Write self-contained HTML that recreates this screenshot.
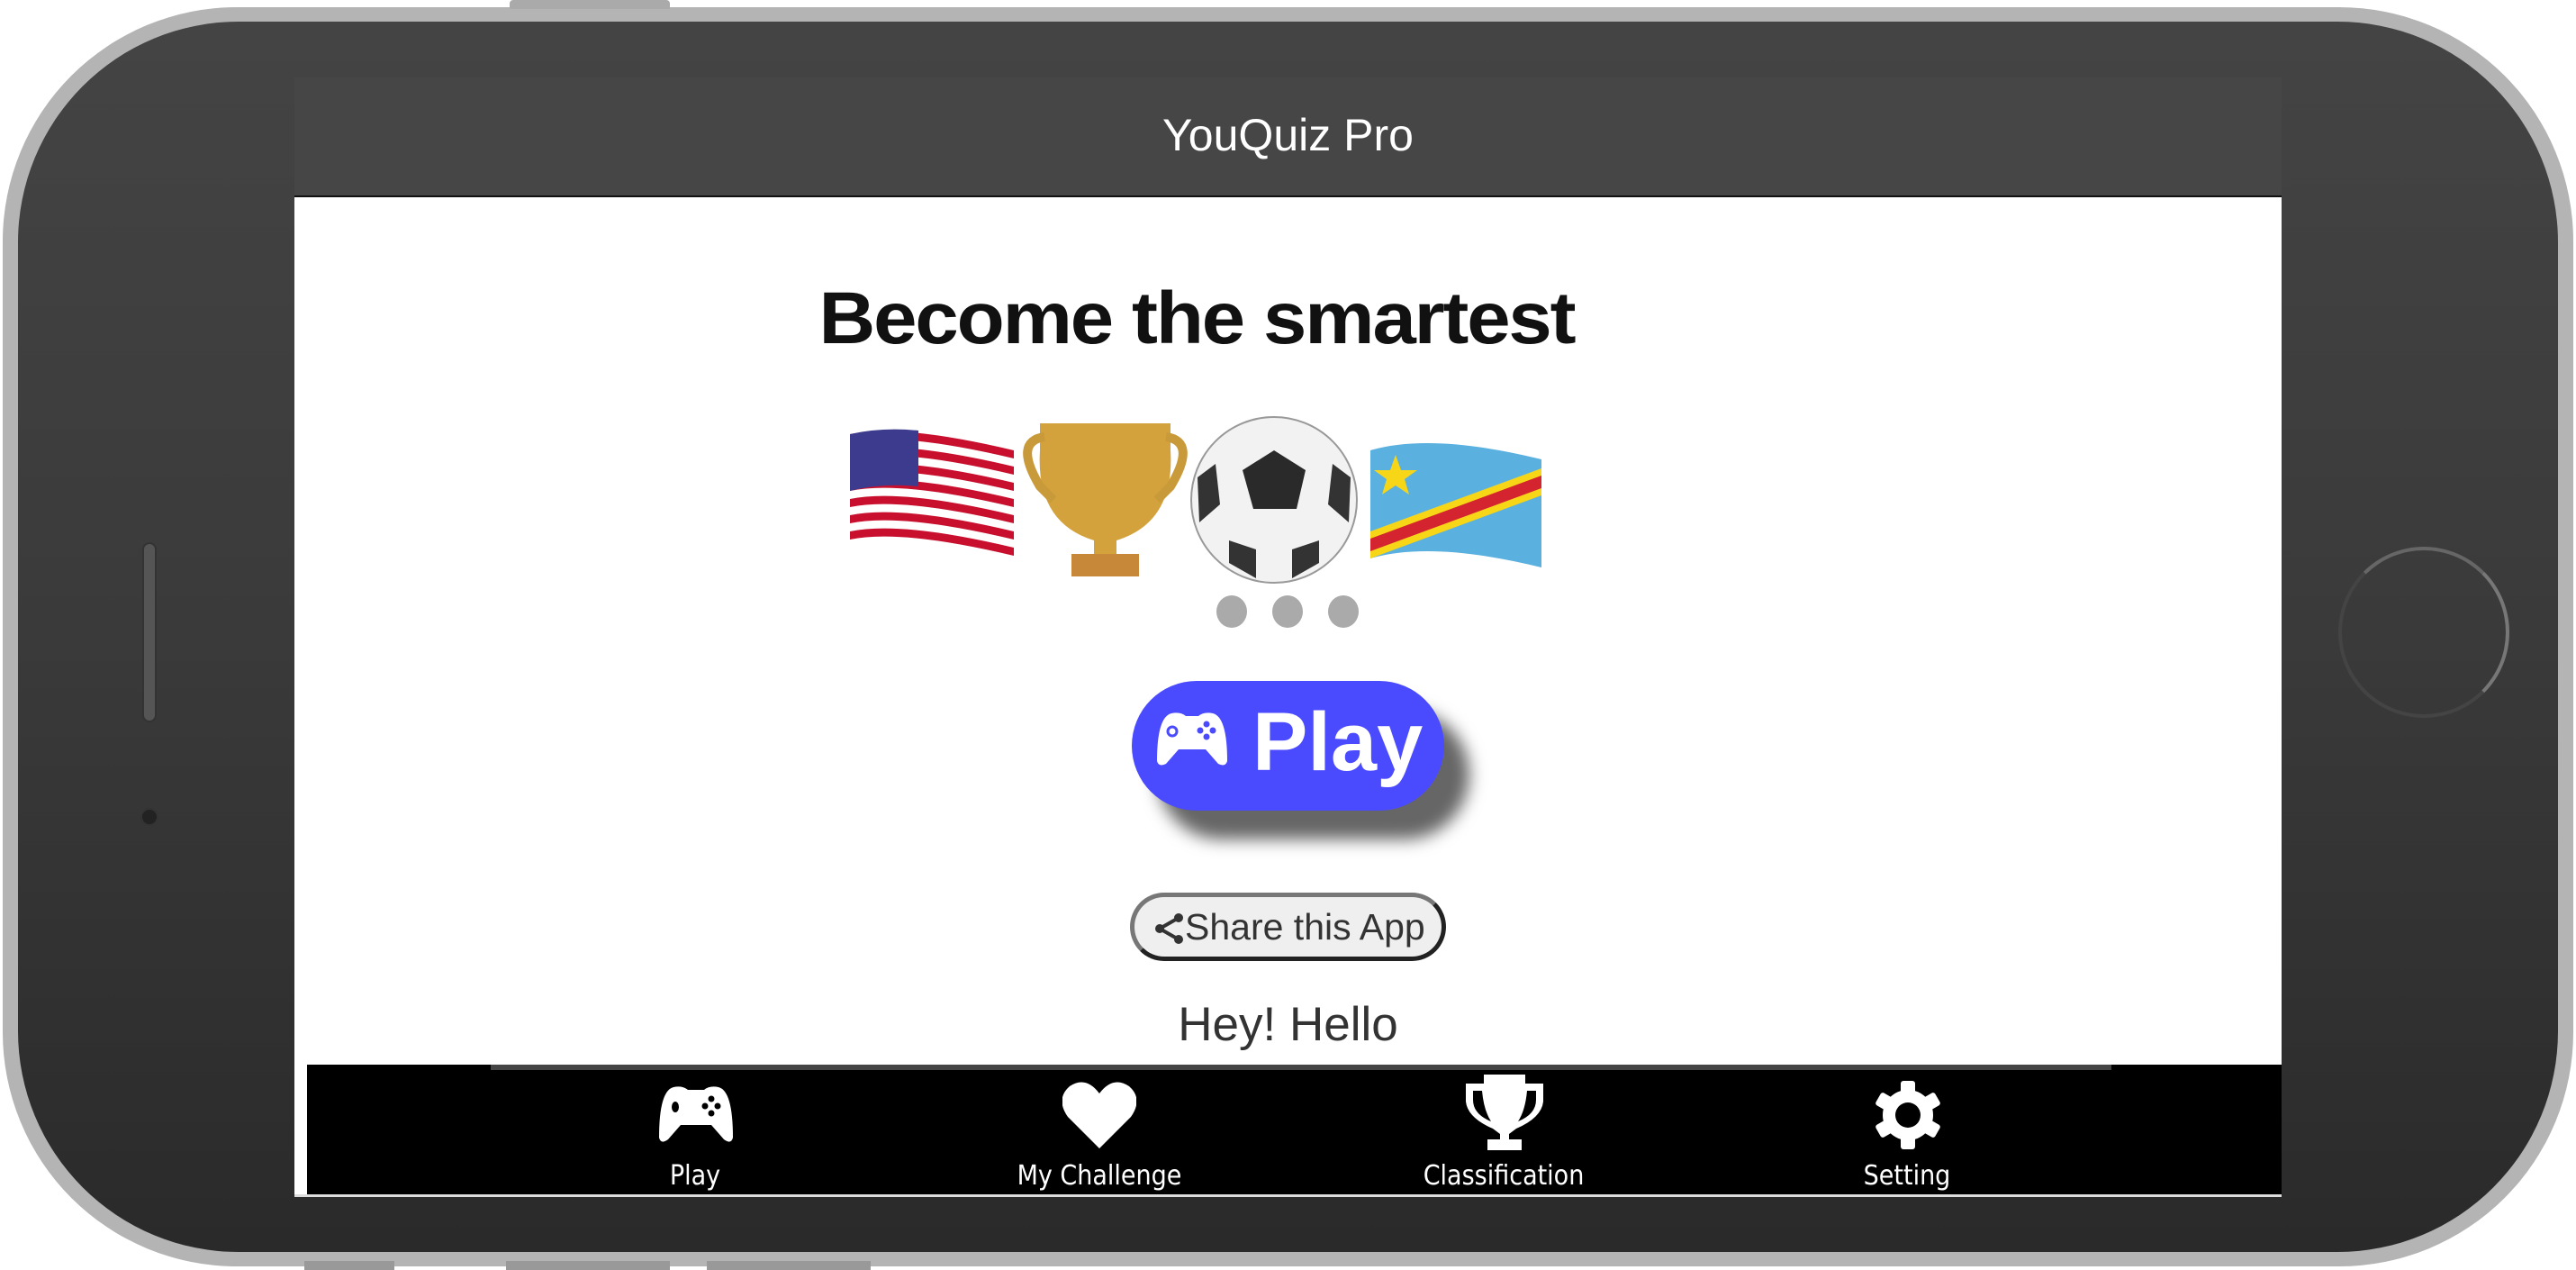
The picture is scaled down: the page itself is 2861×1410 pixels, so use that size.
<!DOCTYPE html>
<html><head><meta charset="utf-8"><style>
*{margin:0;padding:0;box-sizing:border-box}
body{width:2861px;height:1410px;background:#fff;position:relative;overflow:hidden;font-family:"Liberation Sans",sans-serif}
.abs{position:absolute}
#rim{left:3px;top:8px;width:2855px;height:1398px;border-radius:260px;background:#b4b4b4}
#body{left:20px;top:24px;width:2821px;height:1366px;border-radius:245px;background:linear-gradient(#444,#3a3a3a 50%,#2a2a2a)}
#screen{left:327px;top:86px;width:2207px;height:1242px;background:#fff}
#hdr{left:327px;top:86px;width:2207px;height:133px;background:#464646;border-bottom:2px solid #111;color:#fff;font-size:50px;text-align:center;line-height:128px}
.t{text-align:center;width:100%;left:0}
.dot{width:34px;height:36px;border-radius:50%;background:#aaa;top:661px}
#play{left:1257px;top:756px;width:347px;height:144px;border-radius:72px;background:#4a4aff;box-shadow:28px 32px 18px #666;color:#fff;font-weight:bold;font-size:92px;line-height:144px}
#share{left:1255px;top:991px;width:351px;height:76px;border-radius:38px;background:#efefef;border:5px solid #777;border-right-color:#222;border-bottom-color:#222;color:#333;font-size:41px;line-height:66px}
#nav{left:341px;top:1182px;width:2193px;height:145px;background:#000}
.lbl{color:#fff;font-size:30px;top:1288px;width:300px;text-align:center;font-family:"DejaVu Sans Condensed","Liberation Sans Narrow",sans-serif}
</style></head><body>
<div id="rim" class="abs"></div>
<div id="body" class="abs"></div>
<div class="abs" style="left:566px;top:0;width:178px;height:10px;background:#aaa;border-radius:4px 4px 0 0"></div>
<div class="abs" style="left:338px;top:1400px;width:100px;height:10px;background:#999"></div>
<div class="abs" style="left:562px;top:1400px;width:182px;height:10px;background:#999"></div>
<div class="abs" style="left:785px;top:1400px;width:182px;height:10px;background:#999"></div>
<div class="abs" style="left:158px;top:602px;width:16px;height:200px;border-radius:8px;background:#555;border:2px solid #333"></div>
<div class="abs" style="left:156px;top:897px;width:20px;height:20px;border-radius:50%;background:#222;border:2px solid #333"></div>
<div class="abs" style="left:2597px;top:607px;width:190px;height:190px;border-radius:50%;border:4px solid #444;border-top-color:#666;border-right-color:#777"></div>
<div id="screen" class="abs"></div>
<div id="hdr" class="abs">YouQuiz Pro</div>
<div class="abs" style="left:909px;top:307px;width:840px;text-align:center;font-weight:bold;font-size:82px;color:#111;letter-spacing:-2px;font-family:'Liberation Sans Narrow','Liberation Sans',sans-serif;transform:scaleX(1.06)">Become the smartest</div>
<svg class="abs" style="left:940px;top:460px" width="780" height="190" viewBox="0 0 780 190">
 <g transform="translate(0,10)">
  <path d="M4 12 Q60 0 186 30 L186 150 Q60 120 4 130Z" fill="#fff"/>
  <g fill="#c8102e">
   <path d="M4 12 Q60 0 186 30 L186 39 Q60 9 4 21Z"/><path d="M4 30 Q60 18 186 48 L186 57 Q60 27 4 39Z"/>
   <path d="M4 48 Q60 36 186 66 L186 75 Q60 45 4 57Z"/><path d="M4 66 Q60 54 186 84 L186 93 Q60 63 4 75Z"/>
   <path d="M4 84 Q60 72 186 102 L186 111 Q60 81 4 93Z"/><path d="M4 102 Q60 90 186 120 L186 129 Q60 99 4 111Z"/>
   <path d="M4 120 Q60 108 186 138 L186 147 Q60 117 4 129Z"/></g>
  <path d="M4 12 Q40 4 80 8 L80 70 Q40 66 4 75Z" fill="#3c3b8e"/>
 </g>
 <g transform="translate(195,0)">
  <path d="M20 10 H165 V40 Q170 120 105 140 V160 H120 V175 H65 V160 H80 V140 Q15 120 20 40Z" fill="#d4a23c"/>
  <path d="M25 25 Q-10 30 20 80 L35 95" stroke="#c99a3a" stroke-width="10" fill="none"/>
  <path d="M160 25 Q195 30 165 80 L150 95" stroke="#c99a3a" stroke-width="10" fill="none"/>
  <rect x="55" y="155" width="75" height="25" fill="#c8883a"/>
 </g>
 <g transform="translate(380,0)">
  <ellipse cx="95" cy="95" rx="92" ry="92" fill="#f2f2f2" stroke="#999" stroke-width="2"/>
  <path d="M95 40 L130 62 L120 105 L72 105 L60 62Z" fill="#2a2a2a"/>
  <path d="M10 70 L30 55 L35 100 L12 120Z" fill="#333"/><path d="M180 70 L160 55 L155 100 L178 120Z" fill="#333"/>
  <path d="M45 140 L75 150 L75 182 L45 165Z" fill="#333"/><path d="M145 140 L115 150 L115 182 L145 165Z" fill="#333"/>
 </g>
 <g transform="translate(580,10)">
  <path d="M2 30 Q70 10 192 40 L192 160 Q70 130 2 150Z" fill="#5ab0de"/>
  <path d="M2 120 L192 50 L192 80 L2 150Z" fill="#f7d618"/>
  <path d="M2 128 L192 58 L192 72 L2 142Z" fill="#d3242f"/>
  <polygon points="30,35 36,52 54,52 40,62 45,79 30,69 15,79 20,62 6,52 24,52" fill="#f7d618"/>
 </g>
</svg>
<div class="abs dot" style="left:1351px"></div>
<div class="abs dot" style="left:1413px"></div>
<div class="abs dot" style="left:1475px"></div>
<div id="play" class="abs"><svg class="abs" style="left:26px;top:34px" width="82" height="62" viewBox="0 0 82 62"><path d="M18 2 Q28 0 34 5 H48 Q54 0 64 2 Q80 6 80 55 Q78 62 70 58 L56 42 H26 L12 58 Q4 62 2 55 Q2 6 18 2Z" fill="#fff"/><circle cx="19" cy="22" r="5" fill="none" stroke="#4a4aff" stroke-width="3"/><circle cx="57" cy="14" r="3.5" fill="#4a4aff"/><circle cx="50" cy="21" r="3.5" fill="#4a4aff"/><circle cx="64" cy="21" r="3.5" fill="#4a4aff"/><circle cx="57" cy="28" r="3.5" fill="#4a4aff"/></svg><span class="abs" style="left:134px;top:-4px">Play</span></div>
<div id="share" class="abs"><svg class="abs" style="left:22px;top:18px" width="34" height="34" viewBox="0 0 34 34"><circle cx="27" cy="5" r="5" fill="#333"/><circle cx="6" cy="17" r="5" fill="#333"/><circle cx="27" cy="29" r="5" fill="#333"/><path d="M27 5 L6 17 L27 29" stroke="#333" stroke-width="4" fill="none"/></svg><span class="abs" style="left:56px;top:0">Share this App</span></div>
<div class="abs t" style="top:1107px;font-size:53px;color:#333">Hey! Hello</div>
<div id="nav" class="abs"></div>
<div class="abs" style="left:545px;top:1182px;width:1800px;height:6px;background:#444"></div>
<div class="abs" style="left:327px;top:1326px;width:2207px;height:3px;background:#ddd"></div>
<svg class="abs" style="left:730px;top:1205px" width="86" height="66" viewBox="0 0 86 66"><path d="M18 2 Q28 0 34 5 H52 Q58 0 68 2 Q84 6 84 58 Q82 66 74 60 L60 44 H26 L12 60 Q4 66 2 58 Q2 6 18 2Z" fill="#fff"/><ellipse cx="20" cy="24" rx="4" ry="6" fill="#000"/><circle cx="60" cy="15" r="3.5" fill="#000"/><circle cx="53" cy="23" r="3.5" fill="#000"/><circle cx="67" cy="23" r="3.5" fill="#000"/><circle cx="60" cy="31" r="3.5" fill="#000"/></svg>
<svg class="abs" style="left:1180px;top:1200px" width="82" height="75" viewBox="0 0 82 75"><path d="M41 75 L6 40 Q-8 20 8 6 Q26 -6 41 14 Q56 -6 74 6 Q90 20 76 40Z" fill="#fff"/></svg>
<svg class="abs" style="left:1628px;top:1193px" width="86" height="84" viewBox="0 0 86 84"><path d="M20 0 H66 V10 H86 V30 Q84 48 56 60 L48 66 V72 H62 V84 H24 V72 H38 V66 L30 60 Q2 48 0 30 V10 H20Z" fill="#fff"/><path d="M8 18 H18 Q20 40 28 52 Q8 44 8 28Z M78 18 H68 Q66 40 58 52 Q78 44 78 28Z" fill="#000"/></svg>
<svg class="abs" style="left:2081px;top:1200px" width="76" height="76" viewBox="0 0 76 76"><g fill="#fff"><circle cx="38" cy="38" r="28"/><rect x="30" y="0" width="16" height="76" rx="3"/><rect x="30" y="0" width="16" height="76" rx="3" transform="rotate(60 38 38)"/><rect x="30" y="0" width="16" height="76" rx="3" transform="rotate(120 38 38)"/></g><circle cx="38" cy="38" r="14" fill="#000"/></svg>
<div class="abs lbl" style="left:622px">Play</div>
<div class="abs lbl" style="left:1071px">My Challenge</div>
<div class="abs lbl" style="left:1520px">Classification</div>
<div class="abs lbl" style="left:1968px">Setting</div>
</body></html>
